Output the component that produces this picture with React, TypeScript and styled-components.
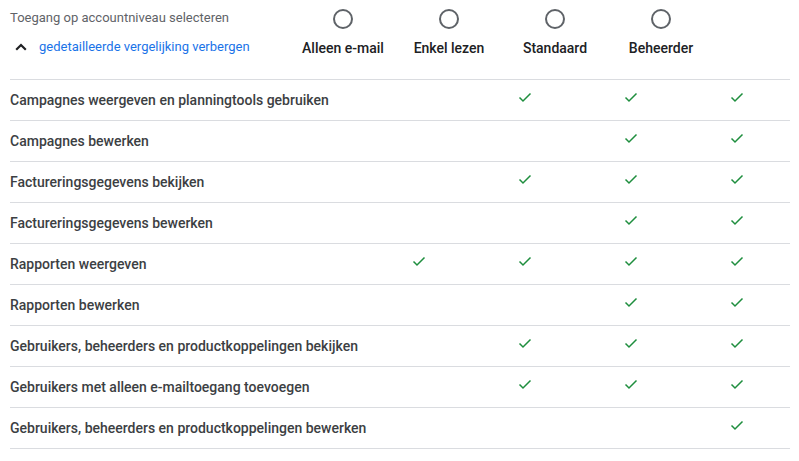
import React from "react";
import styled, { createGlobalStyle } from "styled-components";

const Global = createGlobalStyle`
  html, body { margin: 0; padding: 0; background: #fff; }
  body { font-family: Roboto, "Noto Sans", Arial, sans-serif; -webkit-font-smoothing: antialiased; }
`;

const Page = styled.div`
  padding: 0 9px 0 10px;
  width: 780px;
`;

const Header = styled.div`
  display: grid;
  grid-template-columns: 280px repeat(4, 106px);
  height: 80px;
`;

const Intro = styled.div`
  display: flex;
  flex-direction: column;
  padding-top: 8px;
`;

const Title = styled.div`
  font-size: 13px;
  line-height: 20px;
  color: #5f6368;
`;

const Toggle = styled.div`
  display: flex;
  align-items: center;
  gap: 12px;
  margin-top: 9px;
  padding-left: 5px;
  height: 20px;
`;

const Link = styled.a`
  font-size: 13px;
  line-height: 20px;
  color: #1a73e8;
  text-decoration: none;
  cursor: pointer;
`;

const RoleCol = styled.div`
  display: flex;
  flex-direction: column;
  align-items: center;
  padding-top: 9px;
`;

const Radio = styled.span`
  box-sizing: border-box;
  width: 20px;
  height: 20px;
  border-radius: 50%;
  border: 2px solid #5f6368;
`;

const RoleLabel = styled.div`
  margin-top: 9px;
  font-size: 14px;
  line-height: 20px;
  font-weight: 500;
  color: #202124;
`;

const Table = styled.div`
  margin-top: -1px;
  border-top: 1px solid #dadce0;
`;

const Row = styled.div`
  display: grid;
  grid-template-columns: 356px repeat(4, 106px);
  align-items: center;
  height: 40px;
  border-bottom: 1px solid #dadce0;
`;

const Label = styled.div`
  font-size: 14px;
  font-weight: 500;
  color: #3c4043;
  line-height: 20px;
  white-space: nowrap;
`;

const Cell = styled.div`
  display: flex;
  justify-content: center;
  align-items: center;
  height: 100%;
  padding-bottom: 6px;
  box-sizing: border-box;
`;

const Check = () => (
  <svg width="14" height="11" viewBox="0 0 14 11" aria-hidden>
    <path d="M1.5 5.5 L5 9 L12.5 1.5" fill="none" stroke="#1e8e3e" strokeWidth="1.5" />
  </svg>
);

const Chevron = () => (
  <svg width="12" height="8" viewBox="0 0 12 8" aria-hidden>
    <path d="M1.2 6.8 L6 2 L10.8 6.8" fill="none" stroke="#202124" strokeWidth="2.2" />
  </svg>
);

const roles = ["Alleen e-mail", "Enkel lezen", "Standaard", "Beheerder"];

const rows: [string, boolean[]][] = [
  ["Campagnes weergeven en planningtools gebruiken", [false, true, true, true]],
  ["Campagnes bewerken", [false, false, true, true]],
  ["Factureringsgegevens bekijken", [false, true, true, true]],
  ["Factureringsgegevens bewerken", [false, false, true, true]],
  ["Rapporten weergeven", [true, true, true, true]],
  ["Rapporten bewerken", [false, false, true, true]],
  ["Gebruikers, beheerders en productkoppelingen bekijken", [false, true, true, true]],
  ["Gebruikers met alleen e-mailtoegang toevoegen", [false, true, true, true]],
  ["Gebruikers, beheerders en productkoppelingen bewerken", [false, false, false, true]],
];

export default function App() {
  return (
    <Page>
      <Global />
      <Header>
        <Intro>
          <Title>Toegang op accountniveau selecteren</Title>
          <Toggle>
            <Chevron />
            <Link>gedetailleerde vergelijking verbergen</Link>
          </Toggle>
        </Intro>
        {roles.map((r) => (
          <RoleCol key={r}>
            <Radio />
            <RoleLabel>{r}</RoleLabel>
          </RoleCol>
        ))}
      </Header>
      <Table>
        {rows.map(([label, checks]) => (
          <Row key={label}>
            <Label>{label}</Label>
            {checks.map((c, i) => (
              <Cell key={i}>{c ? <Check /> : null}</Cell>
            ))}
          </Row>
        ))}
      </Table>
    </Page>
  );
}
